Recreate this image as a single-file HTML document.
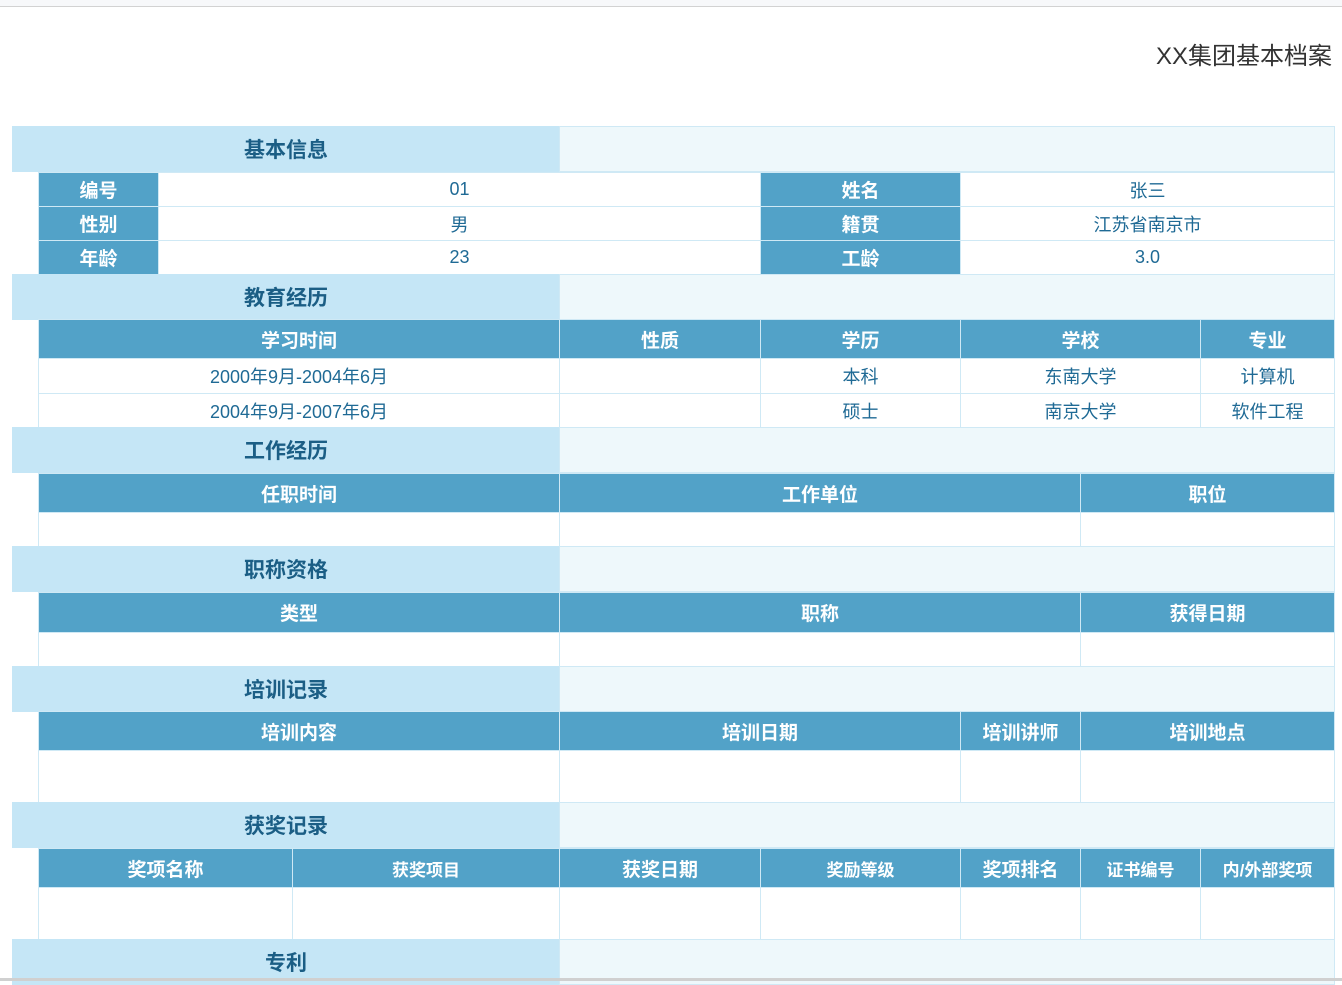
<!DOCTYPE html>
<html><head><meta charset="utf-8"><style>
body{margin:0;width:1342px;height:981px;background:#fff;position:relative;overflow:hidden;font-family:"Liberation Sans","Noto Sans CJK SC",sans-serif}
.top{position:absolute;left:0;top:0;width:1342px;height:6px;background:#f7f8fa;border-bottom:1px solid #d2d2d2}
.t{position:absolute;right:10px;top:36px;font-size:24px;color:#333}
.c{position:absolute;box-sizing:border-box;border:1px solid #cfe9f5;display:flex;align-items:center;justify-content:center;margin:-1px 0 0 0}
.s{background:#c5e6f6;font-weight:bold;font-size:21px;color:#1b5e85;border-color:#c5e6f6}
.e{background:#eef8fb}
.h{background:#52a2c8;color:#fff;font-weight:bold;font-size:19px;border-color:#cfe9f5}
.d{background:#fff;color:#1f6a95;font-size:18px}
.bot{position:absolute;left:0;top:978px;width:1342px;height:3px;background:#d0d0d0}
</style></head><body>
<div class="top"></div>
<div class="t">XX集团基本档案</div>

<div class="c s" style="left:12px;top:127px;width:548px;height:46px">基本信息</div>
<div class="c e" style="left:559px;top:127px;width:776px;height:46px"></div>
<div class="c h" style="left:38px;top:173px;width:121px;height:35px">编号</div>
<div class="c d" style="left:158px;top:173px;width:603px;height:35px">01</div>
<div class="c h" style="left:760px;top:173px;width:201px;height:35px">姓名</div>
<div class="c d" style="left:960px;top:173px;width:375px;height:35px">张三</div>
<div class="c h" style="left:38px;top:207px;width:121px;height:35px">性别</div>
<div class="c d" style="left:158px;top:207px;width:603px;height:35px">男</div>
<div class="c h" style="left:760px;top:207px;width:201px;height:35px">籍贯</div>
<div class="c d" style="left:960px;top:207px;width:375px;height:35px">江苏省南京市</div>
<div class="c h" style="left:38px;top:241px;width:121px;height:35px">年龄</div>
<div class="c d" style="left:158px;top:241px;width:603px;height:35px">23</div>
<div class="c h" style="left:760px;top:241px;width:201px;height:35px">工龄</div>
<div class="c d" style="left:960px;top:241px;width:375px;height:35px">3.0</div>

<div class="c s" style="left:12px;top:275px;width:548px;height:46px">教育经历</div>
<div class="c e" style="left:559px;top:275px;width:776px;height:46px"></div>
<div class="c h" style="left:38px;top:320px;width:522px;height:40px">学习时间</div>
<div class="c h" style="left:559px;top:320px;width:202px;height:40px">性质</div>
<div class="c h" style="left:760px;top:320px;width:201px;height:40px">学历</div>
<div class="c h" style="left:960px;top:320px;width:241px;height:40px">学校</div>
<div class="c h" style="left:1200px;top:320px;width:135px;height:40px">专业</div>
<div class="c d" style="left:38px;top:359px;width:522px;height:36px">2000年9月-2004年6月</div>
<div class="c d" style="left:559px;top:359px;width:202px;height:36px"></div>
<div class="c d" style="left:760px;top:359px;width:201px;height:36px">本科</div>
<div class="c d" style="left:960px;top:359px;width:241px;height:36px">东南大学</div>
<div class="c d" style="left:1200px;top:359px;width:135px;height:36px">计算机</div>
<div class="c d" style="left:38px;top:394px;width:522px;height:35px">2004年9月-2007年6月</div>
<div class="c d" style="left:559px;top:394px;width:202px;height:35px"></div>
<div class="c d" style="left:760px;top:394px;width:201px;height:35px">硕士</div>
<div class="c d" style="left:960px;top:394px;width:241px;height:35px">南京大学</div>
<div class="c d" style="left:1200px;top:394px;width:135px;height:35px">软件工程</div>

<div class="c s" style="left:12px;top:428px;width:548px;height:46px">工作经历</div>
<div class="c e" style="left:559px;top:428px;width:776px;height:46px"></div>
<div class="c h" style="left:38px;top:474px;width:522px;height:40px">任职时间</div>
<div class="c h" style="left:559px;top:474px;width:522px;height:40px">工作单位</div>
<div class="c h" style="left:1080px;top:474px;width:255px;height:40px">职位</div>
<div class="c d" style="left:38px;top:513px;width:522px;height:35px"></div>
<div class="c d" style="left:559px;top:513px;width:522px;height:35px"></div>
<div class="c d" style="left:1080px;top:513px;width:255px;height:35px"></div>

<div class="c s" style="left:12px;top:547px;width:548px;height:46px">职称资格</div>
<div class="c e" style="left:559px;top:547px;width:776px;height:46px"></div>
<div class="c h" style="left:38px;top:593px;width:522px;height:41px">类型</div>
<div class="c h" style="left:559px;top:593px;width:522px;height:41px">职称</div>
<div class="c h" style="left:1080px;top:593px;width:255px;height:41px">获得日期</div>
<div class="c d" style="left:38px;top:633px;width:522px;height:35px"></div>
<div class="c d" style="left:559px;top:633px;width:522px;height:35px"></div>
<div class="c d" style="left:1080px;top:633px;width:255px;height:35px"></div>

<div class="c s" style="left:12px;top:667px;width:548px;height:46px">培训记录</div>
<div class="c e" style="left:559px;top:667px;width:776px;height:46px"></div>
<div class="c h" style="left:38px;top:712px;width:522px;height:40px">培训内容</div>
<div class="c h" style="left:559px;top:712px;width:402px;height:40px">培训日期</div>
<div class="c h" style="left:960px;top:712px;width:121px;height:40px">培训讲师</div>
<div class="c h" style="left:1080px;top:712px;width:255px;height:40px">培训地点</div>
<div class="c d" style="left:38px;top:751px;width:522px;height:53px"></div>
<div class="c d" style="left:559px;top:751px;width:402px;height:53px"></div>
<div class="c d" style="left:960px;top:751px;width:121px;height:53px"></div>
<div class="c d" style="left:1080px;top:751px;width:255px;height:53px"></div>

<div class="c s" style="left:12px;top:803px;width:548px;height:46px">获奖记录</div>
<div class="c e" style="left:559px;top:803px;width:776px;height:46px"></div>
<div class="c h" style="left:38px;top:849px;width:255px;height:40px">奖项名称</div>
<div class="c h" style="left:292px;top:849px;width:268px;height:40px;font-size:17px">获奖项目</div>
<div class="c h" style="left:559px;top:849px;width:202px;height:40px">获奖日期</div>
<div class="c h" style="left:760px;top:849px;width:201px;height:40px;font-size:17px">奖励等级</div>
<div class="c h" style="left:960px;top:849px;width:121px;height:40px">奖项排名</div>
<div class="c h" style="left:1080px;top:849px;width:121px;height:40px;font-size:17px">证书编号</div>
<div class="c h" style="left:1200px;top:849px;width:135px;height:40px;font-size:17px">内/外部奖项</div>
<div class="c d" style="left:38px;top:888px;width:255px;height:53px"></div>
<div class="c d" style="left:292px;top:888px;width:268px;height:53px"></div>
<div class="c d" style="left:559px;top:888px;width:202px;height:53px"></div>
<div class="c d" style="left:760px;top:888px;width:201px;height:53px"></div>
<div class="c d" style="left:960px;top:888px;width:121px;height:53px"></div>
<div class="c d" style="left:1080px;top:888px;width:121px;height:53px"></div>
<div class="c d" style="left:1200px;top:888px;width:135px;height:53px"></div>

<div class="c s" style="left:12px;top:940px;width:548px;height:46px">专利</div>
<div class="c e" style="left:559px;top:940px;width:776px;height:46px"></div>
<div class="bot"></div>
</body></html>
